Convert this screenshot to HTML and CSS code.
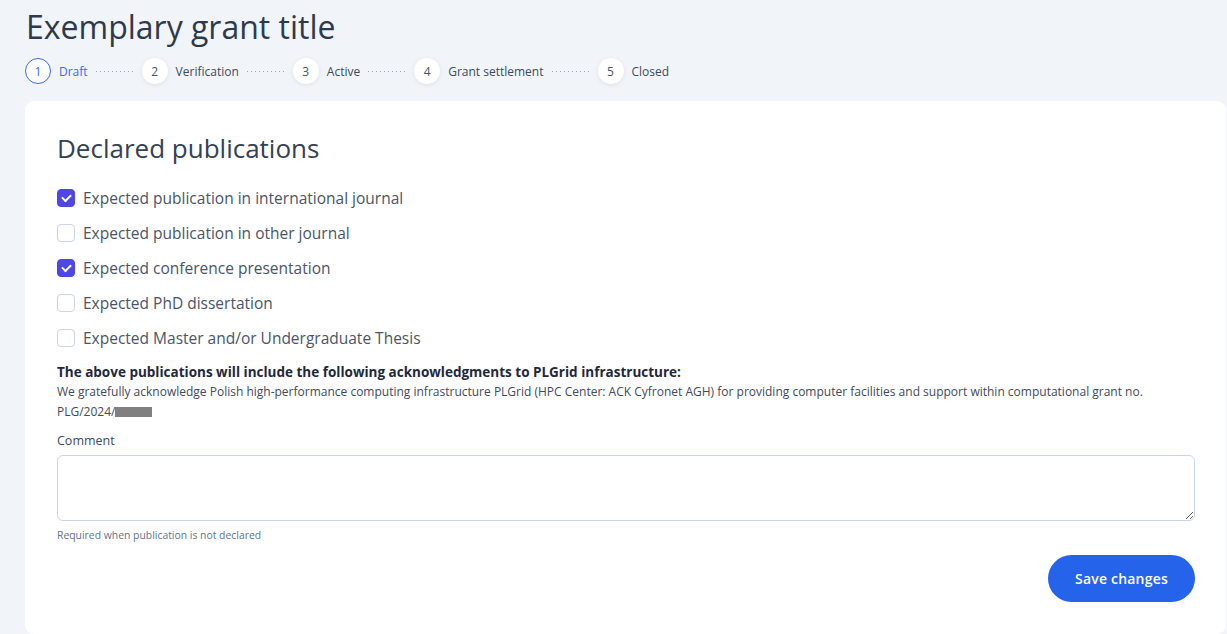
FILE: index.html
```html
<!DOCTYPE html>
<html lang="en">
<head>
    <meta charset="UTF-8">
    <title>Exemplary grant title</title>
    <link rel="stylesheet" href="styles.css">
</head>
<body>
    <div class="page">
        <h1 class="title">Exemplary grant title</h1>

        <!-- Grant status steps -->
        <div class="steps">
            <div class="step active"><span class="num">1</span><span class="label">Draft</span></div>
            <span class="dots"></span>
            <div class="step"><span class="num">2</span><span class="label">Verification</span></div>
            <span class="dots"></span>
            <div class="step"><span class="num">3</span><span class="label">Active</span></div>
            <span class="dots"></span>
            <div class="step"><span class="num">4</span><span class="label">Grant settlement</span></div>
            <span class="dots"></span>
            <div class="step"><span class="num">5</span><span class="label">Closed</span></div>
        </div>

        <div class="card">
            <h2>Declared publications</h2>

            <div class="checks">
                <label class="check"><input type="checkbox" checked><span>Expected publication in international journal</span></label>
                <label class="check"><input type="checkbox"><span>Expected publication in other journal</span></label>
                <label class="check"><input type="checkbox" checked><span>Expected conference presentation</span></label>
                <label class="check"><input type="checkbox"><span>Expected PhD dissertation</span></label>
                <label class="check"><input type="checkbox"><span>Expected Master and/or Undergraduate Thesis</span></label>
            </div>

            <p class="ack-title">The above publications will include the following acknowledgments to PLGrid infrastructure:</p>
            <p class="ack-text">We gratefully acknowledge Polish high-performance computing infrastructure PLGrid (HPC Center: ACK Cyfronet AGH) for providing computer facilities and support within computational grant no. PLG/2024/<span class="redacted"></span></p>

            <label class="field-label" for="comment">Comment</label>
            <textarea id="comment"></textarea>
            <p class="hint">Required when publication is not declared</p>

            <div class="actions">
                <button>Save changes</button>
            </div>
        </div>
    </div>
</body>
</html>
```

FILE: styles.css
```css
* {
    margin: 0;
    padding: 0;
    box-sizing: border-box;
}

body {
    background: #f1f5f9;
    font-family: 'Open Sans', sans-serif;
    color: #334155;
    overflow: hidden;
}

.page {
    padding: 8px 1px 0 25px;
}

.title {
    font-size: 32px;
    font-weight: 400;
    line-height: 38px;
    color: #2d3a4d;
    margin-left: 1px;
}

/* steps */
.steps {
    display: flex;
    align-items: center;
    margin-top: 11px;
    height: 28px;
}

.step {
    display: flex;
    align-items: center;
    gap: 8px;
}

.num {
    width: 26px;
    height: 26px;
    border-radius: 50%;
    background: #fff;
    box-shadow: 0 1px 4px rgba(100, 116, 139, 0.15);
    display: flex;
    align-items: center;
    justify-content: center;
    font-size: 12px;
    color: #475569;
}

.step.active .num {
    border: 1px solid #3b6cf2;
    box-shadow: none;
    color: #3b6cf2;
}

.label {
    font-size: 12px;
    color: #3f4a5c;
}

.step.active .label {
    color: #3b6cf2;
}

.dots {
    width: 38px;
    height: 1px;
    margin: 1px 8px 0 8px;
    background: repeating-linear-gradient(to right, #9aa5b5 0 1px, transparent 1px 4px);
}

/* card */
.card {
    margin-top: 16px;
    background: #fff;
    border-radius: 9px;
    padding: 30px 31px 30px 32px;
    height: 533px;
}

.card h2 {
    font-size: 26px;
    font-weight: 400;
    color: #334155;
    line-height: 34px;
}

.checks {
    margin-top: 24px;
    display: flex;
    flex-direction: column;
    gap: 17px;
}

.check {
    display: flex;
    align-items: center;
    gap: 8px;
    font-size: 15.5px;
    color: #4b5567;
    height: 18px;
}

.check input {
    appearance: none;
    width: 18px;
    height: 18px;
    border: 1px solid #cbd5e1;
    border-radius: 4px;
    background: #fff;
    display: flex;
    align-items: center;
    justify-content: center;
}

.check input:checked {
    background: #4f46e5;
    border-color: #4f46e5;
}

.check input:checked::after {
    content: '';
    width: 7px;
    height: 4px;
    border-left: 2px solid #fff;
    border-bottom: 2px solid #fff;
    transform: rotate(-45deg);
    margin-top: -2px;
}

.ack-title {
    margin-top: 16px;
    font-size: 13.5px;
    font-weight: 700;
    color: #1e293b;
    line-height: 18px;
}

.ack-text {
    font-size: 12px;
    line-height: 20px;
    color: #3f4a5c;
    margin-top: 1px;
}

.redacted {
    display: inline-block;
    width: 37px;
    height: 10px;
    background: #808080;
    vertical-align: -1px;
}

.field-label {
    display: block;
    margin-top: 11px;
    font-size: 12.5px;
    color: #3f4a5c;
    line-height: 16px;
}

textarea {
    display: block;
    width: 100%;
    height: 66px;
    margin-top: 6px;
    border: 1px solid #cbd5e1;
    border-radius: 6px;
    resize: vertical;
    font-family: inherit;
}

.hint {
    margin-top: 7px;
    font-size: 10.4px;
    color: #64748b;
}

.actions {
    display: flex;
    justify-content: flex-end;
    margin-top: 13px;
}

button {
    width: 147px;
    height: 47px;
    border: none;
    border-radius: 24px;
    background: #2563eb;
    color: #fff;
    font-family: inherit;
    font-size: 14px;
    font-weight: 600;
    letter-spacing: 0.2px;
    cursor: pointer;
}
```
